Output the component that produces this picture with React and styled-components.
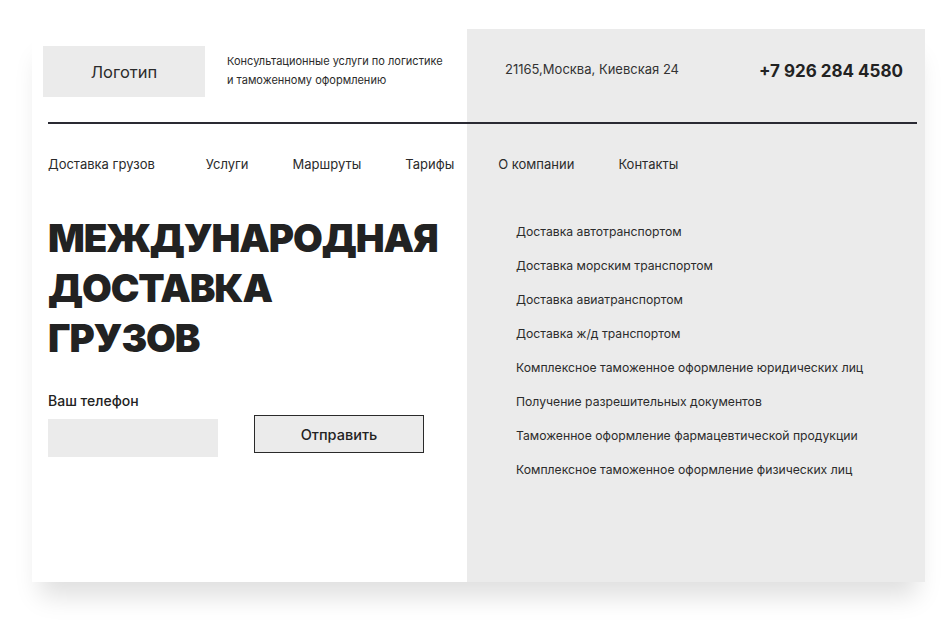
import React from "react";
import styled, { createGlobalStyle } from "styled-components";

const GlobalStyle = createGlobalStyle`
  html, body {
    margin: 0;
    padding: 0;
    background: #fff;
  }
  body {
    font-family: Inter, "Noto Sans", sans-serif;
    color: #2b2b2b;
  }
`;

const Page = styled.div`
  width: 952px;
  height: 625px;
  padding: 29px 27px 0 32px;
  box-sizing: border-box;
`;

const Card = styled.div`
  height: 553px;
  background: linear-gradient(to right, #fff 435px, #ebebeb 435px);
  box-shadow: 0 22px 24px -8px rgba(0, 0, 0, 0.13);
  padding: 0 8px 0 16px;
  box-sizing: border-box;
`;

const Header = styled.header`
  display: flex;
  align-items: flex-start;
  height: 93px;
  border-bottom: 2px solid #2a2a33;
`;

const HeaderLeft = styled.div`
  display: flex;
  align-items: flex-start;
  width: 419px;
  padding-top: 17px;
`;

const Logo = styled.div`
  width: 162px;
  height: 51px;
  margin-left: -5px;
  background: #ebebeb;
  display: flex;
  align-items: center;
  justify-content: center;
  font-size: 16.5px;
  color: #2b2b2b;
`;

const Tagline = styled.p`
  margin: 6px 0 0 22px;
  font-size: 11px;
  line-height: 19px;
  color: #2b2b2b;
`;

const HeaderRight = styled.div`
  flex: 1;
  display: flex;
  align-items: flex-start;
  justify-content: space-between;
  padding: 32px 14px 0 38px;
`;

const Address = styled.span`
  font-size: 13px;
  line-height: 16px;
  color: #333;
`;

const Phone = styled.span`
  font-size: 17px;
  line-height: 21px;
  font-weight: 700;
  color: #222;
`;

const Nav = styled.nav`
  display: flex;
  gap: 44px;
  padding-top: 32px;
`;

const NavLink = styled.a`
  font-size: 13px;
  line-height: 16px;
  color: #2b2b2b;
  text-decoration: none;
  margin-right: ${p => p.$extra || 0}px;
`;

const Main = styled.div`
  display: flex;
`;

const Hero = styled.section`
  width: 419px;
`;

const Title = styled.h1`
  margin: 41px 0 0;
  font-size: 38.5px;
  line-height: 50px;
  font-weight: 900;
  color: #222;
  letter-spacing: -1.1px;
`;

const Label = styled.div`
  margin-top: 29px;
  font-size: 14px;
  font-weight: 500;
  color: #222;
`;

const Form = styled.form`
  display: flex;
  align-items: flex-start;
  gap: 36px;
  margin-top: 6px;
`;

const PhoneInput = styled.input`
  width: 170px;
  height: 38px;
  margin-top: 4px;
  border: none;
  background: #ebebeb;
  outline: none;
  box-sizing: border-box;
`;

const SubmitButton = styled.button`
  width: 170px;
  height: 38px;
  border: 1px solid #2a2a2a;
  background: #ebebeb;
  font-family: inherit;
  font-size: 14.5px;
  font-weight: 500;
  color: #222;
  cursor: pointer;
`;

const Services = styled.ul`
  list-style: none;
  margin: 52px 0 0;
  padding: 0 0 0 49px;
  display: flex;
  flex-direction: column;
  gap: 18px;
`;

const Service = styled.li`
  font-size: 12.2px;
  line-height: 16px;
  color: #2b2b2b;
`;

const navItems = ["Доставка грузов", "Услуги", "Маршруты", "Тарифы", "О компании", "Контакты"];

const services = [
  "Доставка автотранспортом",
  "Доставка морским транспортом",
  "Доставка авиатранспортом",
  "Доставка ж/д транспортом",
  "Комплексное таможенное оформление юридических лиц",
  "Получение разрешительных документов",
  "Таможенное оформление фармацевтической продукции",
  "Комплексное таможенное оформление физических лиц",
];

export default function App() {
  return (
    <>
      <GlobalStyle />
      <Page>
        <Card>
          <Header>
            <HeaderLeft>
              <Logo>Логотип</Logo>
              <Tagline>
                Консультационные услуги по логистике
                <br />
                и таможенному оформлению
              </Tagline>
            </HeaderLeft>
            <HeaderRight>
              <Address>21165,Москва, Киевская 24</Address>
              <Phone>+7 926 284 4580</Phone>
            </HeaderRight>
          </Header>

          <Nav>
            {navItems.map((item, i) => (
              <NavLink key={item} href="#" $extra={i === 0 ? 7 : 0}>
                {item}
              </NavLink>
            ))}
          </Nav>

          <Main>
            <Hero>
              <Title>
                МЕЖДУНАРОДНАЯ
                <br />
                ДОСТАВКА
                <br />
                ГРУЗОВ
              </Title>
              <Label>Ваш телефон</Label>
              <Form onSubmit={e => e.preventDefault()}>
                <PhoneInput type="tel" />
                <SubmitButton type="submit">Отправить</SubmitButton>
              </Form>
            </Hero>
            <Services>
              {services.map(s => (
                <Service key={s}>{s}</Service>
              ))}
            </Services>
          </Main>
        </Card>
      </Page>
    </>
  );
}
